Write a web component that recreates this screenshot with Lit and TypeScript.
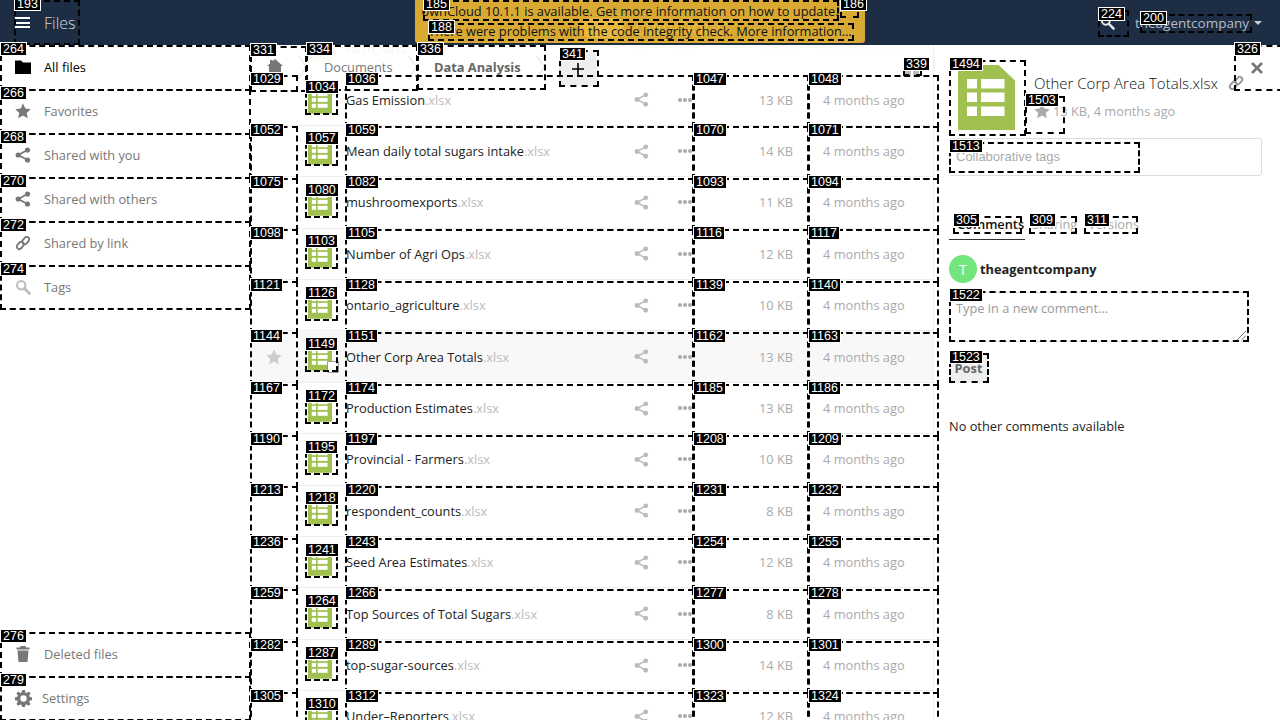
import { LitElement, html, css, svg } from "lit";
import { customElement } from "lit/decorators.js";
import { classMap } from "lit/directives/class-map.js";

const ROW_H = 51.42;
const ROW_TOP = 75;

const files = [
  ["farm_land", "13 KB"],
  ["Gas Emission", "13 KB"],
  ["Mean daily total sugars intake", "14 KB"],
  ["mushroomexports", "11 KB"],
  ["Number of Agri Ops", "12 KB"],
  ["ontario_agriculture", "10 KB"],
  ["Other Corp Area Totals", "13 KB"],
  ["Production Estimates", "13 KB"],
  ["Provincial - Farmers", "10 KB"],
  ["respondent_counts", "8 KB"],
  ["Seed Area Estimates", "12 KB"],
  ["Top Sources of Total Sugars", "8 KB"],
  ["top-sugar-sources", "14 KB"],
  ["Under–Reporters", "12 KB"],
];

// id, x, y, w, h of the numbered dashed marks lying over the page
const fixedMarks: number[][] = [
  [185, 423, 0, 416, 21],
  [186, 840, 0, 19, 18],
  [188, 428, 23, 426, 18],
  [193, 14, 0, 66, 45],
  [200, 1140, 14, 112, 19],
  [224, 1098, 10, 31, 27],
  [264, 0, 45, 251, 46],
  [266, 0, 89, 251, 46],
  [268, 0, 133, 251, 46],
  [270, 0, 177, 251, 46],
  [272, 0, 221, 251, 46],
  [274, 0, 265, 251, 45],
  [276, 0, 632, 251, 46],
  [279, 0, 676, 251, 45],
  [305, 953, 216, 69, 18],
  [309, 1029, 216, 48, 18],
  [311, 1084, 216, 54, 18],
  [326, 1234, 45, 60, 46],
  [331, 250, 46, 57, 46],
  [334, 306, 45, 112, 46],
  [336, 417, 45, 129, 45],
  [339, 903, 60, 19, 16],
  [341, 559, 50, 40, 37],
  [1494, 949, 60, 77, 76],
  [1503, 1025, 96, 40, 38],
  [1513, 949, 142, 191, 31],
  [1522, 949, 291, 300, 51],
  [1523, 949, 353, 40, 30],
];

function buildMarks() {
  const marks = [...fixedMarks];
  const h = ROW_H + 2;
  for (let i = 0; i < 13; i++) {
    const y = ROW_TOP + ROW_H * i;
    const base = 1029 + 23 * i;
    marks.push([base, 250, y, 48, i === 0 ? 17 : h]);
    marks.push([base + 5, 305, y + 8, 33, 32]);
    marks.push([base + 7, 345, y, 349, h]);
    marks.push([base + 18, 693, y, 116, h]);
    marks.push([base + 19, 808, y, 131, h]);
  }
  return marks.sort((a, b) => a[0] - b[0]);
}

const icon = (size: number, body: unknown, view = "0 0 16 16") =>
  html`<svg class="ico" width=${size} height=${size} viewBox=${view} fill="currentColor">${body}</svg>`;

const shareIcon = (size = 16) =>
  icon(
    size,
    svg`<circle cx="12.5" cy="3" r="2.6"/><circle cx="3.2" cy="8" r="2.6"/><circle cx="12.5" cy="13" r="2.6"/><path d="M3.2 8l9.3-5M3.2 8l9.3 5" stroke="currentColor" stroke-width="1.6" fill="none"/>`
  );
const starIcon = (size = 16) =>
  icon(size, svg`<path d="M8 .6l2.3 5 5.4.6-4 3.7 1.1 5.4L8 12.6l-4.8 2.7 1.1-5.4-4-3.7 5.4-.6z"/>`);
const searchIcon = (size = 16) =>
  icon(
    size,
    svg`<circle cx="6.2" cy="6.2" r="4.2" fill="none" stroke="currentColor" stroke-width="2"/><path d="M9.5 9.5l5 5" stroke="currentColor" stroke-width="2.6" stroke-linecap="round"/>`
  );
const linkIcon = () =>
  icon(
    16,
    svg`<g fill="none" stroke="currentColor" stroke-width="2"><rect x="8.2" y="1.6" width="5" height="8" rx="2.5" transform="rotate(40 10.7 5.6)"/><rect x="2.8" y="6.4" width="5" height="8" rx="2.5" transform="rotate(40 5.3 10.4)"/></g>`
  );
const sheetIcon = (w: number, h: number) =>
  html`<svg class="ico" width=${w} height=${h} viewBox="0 0 57 65">
    <path d="M1 0h39.5L57 15.5V64a1 1 0 0 1-1 1H1a1 1 0 0 1-1-1V1a1 1 0 0 1 1-1z" fill="#a0c04f"/>
    <g fill="#fff">
      <rect x="9" y="14" width="10" height="9.5"/><rect x="23" y="14" width="23.5" height="9.5"/>
      <rect x="9" y="27.5" width="10" height="9.5"/><rect x="23" y="27.5" width="23.5" height="9.5"/>
      <rect x="9" y="41.5" width="10" height="9.5"/><rect x="23" y="41.5" width="23.5" height="9.5"/>
    </g>
  </svg>`;
const chevron = () =>
  html`<svg class="chev" width="9" height="24" viewBox="0 0 9 24"><path d="M.5 .5l8 11.5-8 11.5" fill="none" stroke="#ddd"/></svg>`;

const navTop = [
  { label: "All files", active: true, ico: icon(16, svg`<path d="M0 1.5h6l2 2h8v11.5H0z"/>`) },
  { label: "Favorites", ico: starIcon() },
  { label: "Shared with you", ico: shareIcon() },
  { label: "Shared with others", ico: shareIcon() },
  {
    label: "Shared by link",
    ico: icon(
      16,
      svg`<g fill="none" stroke="currentColor" stroke-width="1.8"><rect x="8.2" y="1.6" width="5" height="8" rx="2.5" transform="rotate(40 10.7 5.6)"/><rect x="2.8" y="6.4" width="5" height="8" rx="2.5" transform="rotate(40 5.3 10.4)"/></g>`
    ),
  },
  { label: "Tags", muted: true, ico: searchIcon() },
];

@customElement("app-root")
export class AppRoot extends LitElement {
  static styles = css`
    :host {
      display: block;
      position: relative;
      width: 1280px;
      height: 720px;
      overflow: hidden;
      background: #fff;
      font-family: "Open Sans", sans-serif;
      font-size: 12.8px;
      color: #000;
    }
    .ico {
      display: block;
      flex: none;
    }

    .topbar {
      position: relative;
      height: 45px;
      background: #1d2d44;
      display: flex;
      align-items: center;
      justify-content: space-between;
      color: #fff;
    }
    .app-name {
      display: flex;
      align-items: center;
      padding-left: 15px;
      gap: 14px;
      font-size: 16px;
      font-weight: 300;
      color: #d2d5da;
    }
    .burger {
      width: 15px;
      height: 11px;
      border-top: 2px solid #fff;
      border-bottom: 2px solid #fff;
      box-sizing: border-box;
      position: relative;
    }
    .burger::after {
      content: "";
      position: absolute;
      left: 0;
      right: 0;
      top: 2.5px;
      height: 2px;
      background: #fff;
    }
    .logo {
      position: absolute;
      left: 580px;
      top: 14px;
      display: flex;
      align-items: center;
      gap: 10px;
      color: #fff;
      font-size: 20px;
    }
    .logo span {
      display: block;
      width: 44px;
      height: 20px;
      border-radius: 12px;
      background: #fff;
    }
    .user-area {
      display: flex;
      align-items: center;
      padding-right: 18px;
    }
    .user-area .search {
      color: #e8eaed;
      margin-right: 20px;
    }
    .user-name {
      color: #b6bcc6;
      font-size: 13.5px;
    }
    .caret {
      width: 0;
      height: 0;
      margin-left: 5px;
      border: 4px solid transparent;
      border-top: 4px solid #c8ccd3;
      border-bottom: 0;
    }
    .notice {
      position: absolute;
      left: 415px;
      top: 0;
      width: 450px;
      height: 43px;
      box-sizing: border-box;
      padding-top: 1px;
      background: rgba(230, 180, 50, 0.93);
      border-radius: 0 0 3px 3px;
      text-align: center;
      font-size: 12.8px;
      line-height: 20px;
      color: #111;
    }
    .notice .first {
      padding-right: 20px;
    }

    .body {
      display: flex;
      height: 675px;
    }
    .nav {
      width: 250px;
      flex: none;
      display: flex;
      flex-direction: column;
    }
    .nav-spacer {
      flex: 1;
    }
    .nav-item {
      height: 44px;
      flex: none;
      display: flex;
      align-items: center;
      padding-left: 15px;
      gap: 13px;
      color: #777;
    }
    .nav-item.active {
      color: #000;
    }
    .nav-item.muted .ico {
      color: #bbb;
    }
    .nav-item.active .ico {
      color: #000;
    }
    .nav-item.settings {
      gap: 10px;
    }

    .main {
      position: relative;
      width: 683px;
      flex: none;
      overflow: hidden;
    }
    .controls {
      position: absolute;
      left: 0;
      top: 0;
      right: 0;
      height: 45px;
      display: flex;
      background: rgba(255, 255, 255, 0.95);
      z-index: 1;
    }
    .crumb {
      display: flex;
      align-items: center;
      justify-content: space-between;
      box-sizing: border-box;
      height: 44px;
      padding-left: 17px;
      color: #777;
      font-size: 12.8px;
    }
    .crumb.home {
      width: 57px;
    }
    .crumb.home > .ico {
      margin-top: -3px;
    }
    .crumb.docs {
      width: 110px;
    }
    .crumb.last {
      width: 128px;
      font-weight: 700;
      color: #666;
    }
    .add {
      width: 38px;
      height: 35px;
      margin: 6px 0 0 14px;
      background: #eee;
      display: flex;
      align-items: center;
      justify-content: center;
    }
    .view-toggle {
      margin: 16px 14px 0 auto;
      width: 14px;
      height: 15px;
      display: grid;
      grid-template-columns: 6px 6px;
      grid-auto-rows: 6px;
      gap: 2px;
    }
    .view-toggle i {
      background: #bbb;
    }

    .list {
      margin-top: -22px;
    }
    .row {
      height: ${ROW_H}px;
      box-sizing: border-box;
      border-bottom: 1px solid #eee;
      display: flex;
      align-items: center;
    }
    .row.hover {
      background: #f8f8f8;
    }
    .c-star {
      width: 47px;
      flex: none;
      display: flex;
      justify-content: center;
      color: #ccc;
    }
    .c-icon {
      width: 48px;
      flex: none;
      position: relative;
      padding-left: 11px;
      box-sizing: border-box;
    }
    .check {
      position: absolute;
      left: 30px;
      bottom: -2px;
      width: 10px;
      height: 10px;
      background: #fff;
      border: 1px solid #999;
      border-radius: 1px;
    }
    .c-name {
      width: 348px;
      flex: none;
      display: flex;
      align-items: center;
      box-sizing: border-box;
      padding-left: 1px;
      padding-right: 1px;
      color: #222;
    }
    .ext {
      color: #bbb;
    }
    .c-actions {
      margin-left: auto;
      display: flex;
      align-items: center;
      gap: 29px;
      color: #bbb;
    }
    .dots {
      display: flex;
      gap: 1px;
    }
    .dots i {
      width: 4px;
      height: 4px;
      border-radius: 50%;
      background: #aaa;
    }
    .c-size {
      width: 115px;
      flex: none;
      box-sizing: border-box;
      padding-right: 15px;
      text-align: right;
      color: #aaa;
    }
    .c-date {
      width: 125px;
      flex: none;
      box-sizing: border-box;
      padding-left: 15px;
      color: #aaa;
    }

    .details {
      position: relative;
      width: 347px;
      flex: none;
      box-sizing: border-box;
      border-left: 1px solid #eee;
      padding: 15px 18px 0 15px;
    }
    .close {
      position: absolute;
      right: 17px;
      top: 17px;
      color: #777;
    }
    .file-head {
      display: flex;
      height: 78px;
    }
    .thumb {
      width: 85px;
      padding: 5px 0 0 9px;
      box-sizing: border-box;
      flex: none;
    }
    .title-row {
      display: flex;
      align-items: center;
      gap: 10px;
      margin-top: 13px;
      font-size: 15px;
      font-weight: 300;
      color: #111;
      white-space: nowrap;
    }
    .title-row .ico {
      color: #999;
    }
    .meta {
      display: flex;
      align-items: center;
      gap: 3px;
      margin-top: 9px;
      color: #aaa;
      white-space: nowrap;
    }
    .tags {
      height: 38px;
      box-sizing: border-box;
      border: 1px solid #ddd;
      border-radius: 3px;
      padding: 9px 6px;
      font-family: "Liberation Sans", sans-serif;
      font-size: 13px;
      line-height: 18px;
      color: #aaa;
    }
    .tabs {
      display: flex;
      margin-top: 35px;
      height: 29px;
    }
    .tab {
      height: 29px;
      box-sizing: border-box;
      padding-top: 4px;
      color: #aaa;
      font-size: 12.8px;
      line-height: 18px;
    }
    .tab.on {
      width: 76px;
      padding-left: 8px;
      color: #111;
      font-weight: 600;
      border-bottom: 1px solid #333;
    }
    .tab.two {
      width: 63px;
      padding-left: 7px;
    }
    .author {
      display: flex;
      align-items: center;
      gap: 3px;
      margin-top: 15px;
      font-weight: 700;
      color: #222;
    }
    .avatar {
      width: 28px;
      height: 28px;
      border-radius: 50%;
      background: #72e57d;
      color: #fff;
      display: flex;
      align-items: center;
      justify-content: center;
      font-size: 15px;
      font-weight: 400;
    }
    .comment-box {
      position: relative;
      height: 50px;
      width: 299px;
      margin-top: 9px;
      box-sizing: border-box;
      border: 1px solid #ddd;
      padding: 6px 6px;
      color: #999;
    }
    .grip {
      position: absolute;
      right: 1px;
      bottom: 1px;
    }
    .post {
      display: flex;
      align-items: center;
      justify-content: center;
      width: 39px;
      height: 30px;
      margin-top: 11px;
      background: #eee;
      color: #666;
      font-weight: 700;
      border-radius: 3px;
    }
    .empty {
      margin-top: 34px;
      color: #222;
    }

    .mark {
      position: absolute;
      box-sizing: border-box;
      border: 2px dashed #000;
      pointer-events: none;
      z-index: 5;
    }
    .mark b {
      position: absolute;
      left: -2px;
      top: -5px;
      box-sizing: content-box;
      padding: 0 2px;
      height: 12px;
      background: #000;
      border: 1px solid #fff;
      font: 400 12.5px/12px "Liberation Sans", sans-serif;
      color: #fff;
      white-space: nowrap;
    }
  `;

  private navItem(item: { label: string; ico: unknown; active?: boolean; muted?: boolean }) {
    const classes = { "nav-item": true, active: !!item.active, muted: !!item.muted };
    return html`<div class=${classMap(classes)}>${item.ico}<span>${item.label}</span></div>`;
  }

  private fileRow(file: string[]) {
    const hover = file[0] === "Other Corp Area Totals";
    return html`<div class=${classMap({ row: true, hover })}>
      <div class="c-star">${hover ? starIcon(16) : ""}</div>
      <div class="c-icon">
        ${sheetIcon(24, 28)}${hover ? html`<span class="check"></span>` : ""}
      </div>
      <div class="c-name">
        <span>${file[0]}<span class="ext">.xlsx</span></span>
        <div class="c-actions">
          ${shareIcon(15)}
          <span class="dots"><i></i><i></i><i></i></span>
        </div>
      </div>
      <div class="c-size">${file[1]}</div>
      <div class="c-date">4 months ago</div>
    </div>`;
  }

  render() {
    return html`
      <div class="topbar">
        <div class="app-name"><span class="burger"></span><span>Files</span></div>
        <div class="logo"><span></span>ownCloud</div>
        <div class="user-area">
          <div class="search">${searchIcon(15)}</div>
          <span class="user-name">theagentcompany</span>
          <span class="caret"></span>
        </div>
        <div class="notice">
          <div class="first">ownCloud 10.1.1 is available. Get more information on how to update.</div>
          <div>There were problems with the code integrity check. More information…</div>
        </div>
      </div>
      <div class="body">
        <nav class="nav">
          ${navTop.map((item) => this.navItem(item))}
          <div class="nav-spacer"></div>
          ${this.navItem({
            label: "Deleted files",
            ico: icon(
              16,
              svg`<path d="M5.5 0h5l.5 1.5H14.5v2h-13v-2H5zM2.5 4.5h11l-1 11.5h-9z"/>`
            ),
          })}
          <div class="nav-item settings">
            ${icon(
              17,
              svg`<path fill-rule="evenodd" d="M6.7 0h2.6l.4 2.2 1.3.6 1.9-1.3 1.8 1.8-1.3 1.9.6 1.3 2.2.4v2.6l-2.2.4-.6 1.3 1.3 1.9-1.8 1.8-1.9-1.3-1.3.6-.4 2.2H6.7l-.4-2.2-1.3-.6-1.9 1.3-1.8-1.8 1.3-1.9-.6-1.3L-.2 9.5V6.9L2 6.5l.6-1.3-1.3-1.9 1.8-1.8L5 2.8l1.3-.6zM8 5a3 3 0 1 0 0 6 3 3 0 0 0 0-6z"/>`
            )}
            <span>Settings</span>
          </div>
        </nav>
        <main class="main">
          <div class="controls">
            <div class="crumb home">
              ${icon(16, svg`<path d="M8 1l8 7h-2v6.5H2V8H0l3-2.6V2h2.5v1.2z"/>`)}${chevron()}
            </div>
            <div class="crumb docs"><span>Documents</span>${chevron()}</div>
            <div class="crumb last"><span>Data Analysis</span>${chevron()}</div>
            <div class="add">
              <svg class="ico" width="12" height="12" viewBox="0 0 12 12">
                <path d="M6 0v12M0 6h12" stroke="#000" stroke-width="1.6" />
              </svg>
            </div>
            <div class="view-toggle"><i></i><i></i><i></i><i></i></div>
          </div>
          <div class="list">${files.map((f) => this.fileRow(f))}</div>
        </main>
        <aside class="details">
          <div class="close">
            <svg class="ico" width="12" height="12" viewBox="0 0 12 12">
              <path d="M1 1l10 10M11 1L1 11" stroke="currentColor" stroke-width="2.6" />
            </svg>
          </div>
          <div class="file-head">
            <div class="thumb">${sheetIcon(57, 65)}</div>
            <div>
              <div class="title-row"><span>Other Corp Area Totals.xlsx</span>${linkIcon()}</div>
              <div class="meta">${starIcon(16)}<span>13 KB, 4 months ago</span></div>
            </div>
          </div>
          <div class="tags">Collaborative tags</div>
          <div class="tabs">
            <div class="tab on">Comments</div>
            <div class="tab two">Sharing</div>
            <div class="tab">Versions</div>
          </div>
          <div class="author"><span class="avatar">T</span><span>theagentcompany</span></div>
          <div class="comment-box">
            Type in a new comment...
            <svg class="grip" width="9" height="9" viewBox="0 0 9 9">
              <path d="M0 9l9-9M4.5 9L9 4.5" stroke="#777" fill="none" />
            </svg>
          </div>
          <div class="post">Post</div>
          <div class="empty">No other comments available</div>
        </aside>
      </div>
      ${buildMarks().map(
        ([id, x, y, w, h]) =>
          html`<div class="mark" style="left:${x}px;top:${y}px;width:${w}px;height:${h}px"><b>${id}</b></div>`
      )}
    `;
  }
}
